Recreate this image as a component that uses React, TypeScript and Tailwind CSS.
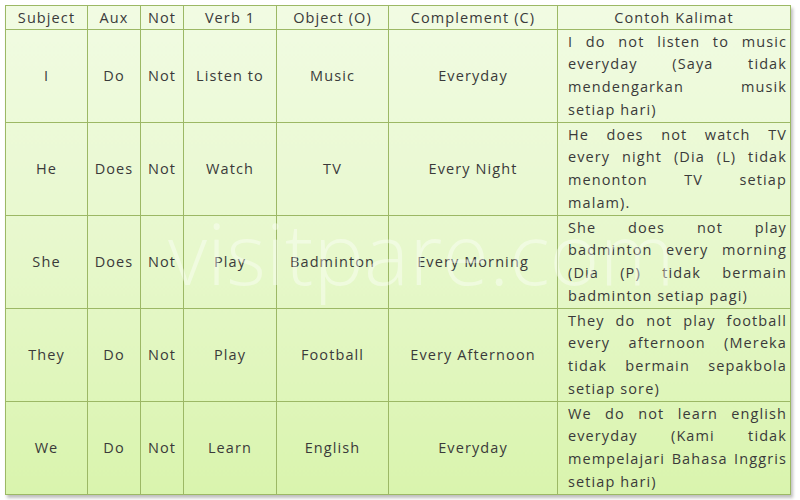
// Zeilenumbrüche der Beispielsätze wie in der Vorlage festgelegt; jede Zeile ausser der
// letzten wird auf volle Breite gestreckt (Blocksatz).
const ROWS = [
  {
    s: "I",
    aux: "Do",
    v: "Listen to",
    o: "Music",
    c: "Everyday",
    ex: ["I do not listen to music", "everyday (Saya tidak", "mendengarkan musik", "setiap hari)"],
  },
  {
    s: "He",
    aux: "Does",
    v: "Watch",
    o: "TV",
    c: "Every Night",
    ex: ["He does not watch TV", "every night (Dia (L) tidak", "menonton TV setiap", "malam)."],
  },
  {
    s: "She",
    aux: "Does",
    v: "Play",
    o: "Badminton",
    c: "Every Morning",
    ex: ["She does not play", "badminton every morning", "(Dia (P) tidak bermain", "badminton setiap pagi)"],
  },
  {
    s: "They",
    aux: "Do",
    v: "Play",
    o: "Football",
    c: "Every Afternoon",
    ex: ["They do not play football", "every afternoon (Mereka", "tidak bermain sepakbola", "setiap sore)"],
  },
  {
    s: "We",
    aux: "Do",
    v: "Learn",
    o: "English",
    c: "Everyday",
    ex: ["We do not learn english", "everyday (Kami tidak", "mempelajari Bahasa Inggris", "setiap hari)"],
  },
];

const HEAD = ["Subject", "Aux", "Not", "Verb 1", "Object (O)", "Complement (C)", "Contoh Kalimat"];
const WIDTHS = ["w-[82px]", "w-[53px]", "w-[43px]", "w-[93px]", "w-[112px]", "w-[169px]", "w-[233px]"];

const cell = "border border-[#9cb865] text-center align-middle";

function Sentence({ lines }: { lines: string[] }) {
  return (
    <div className="flex flex-col">
      {lines.map((l, i) => (
        <span
          key={i}
          className={i < lines.length - 1 ? "block text-justify [text-align-last:justify]" : "block text-left"}
        >
          {l}
        </span>
      ))}
    </div>
  );
}

export default function App() {
  return (
    <div className="relative h-[500px] w-[800px] bg-white font-['Open_Sans',sans-serif] text-[14.5px] tracking-[1.1px] text-[#3a3a3a]">
      <div className="pl-[5px] pt-[5px]">
        <table className="table-fixed border-collapse bg-gradient-to-b from-[#f1fbe3] via-[#e7f8cc] to-[#d9f4ad] shadow-[2px_3px_3px_rgba(0,0,0,0.25)]">
          <colgroup>
            {WIDTHS.map((w, i) => (
              <col key={i} className={w} />
            ))}
          </colgroup>
          <thead>
            <tr className="h-[24px]">
              {HEAD.map((h) => (
                <th key={h} className={`${cell} font-normal leading-[22px]`}>
                  {h}
                </th>
              ))}
            </tr>
          </thead>
          <tbody>
            {ROWS.map((r) => (
              <tr key={r.s} className="h-[93px]">
                <td className={cell}>{r.s}</td>
                <td className={cell}>{r.aux}</td>
                <td className={cell}>Not</td>
                <td className={cell}>{r.v}</td>
                <td className={cell}>{r.o}</td>
                <td className={cell}>{r.c}</td>
                <td className="border border-[#9cb865] pl-[10px] pr-[3px] align-middle leading-[22.6px]">
                  <Sentence lines={r.ex} />
                </td>
              </tr>
            ))}
          </tbody>
        </table>
      </div>

      {/* Wasserzeichen liegt über der Tabelle */}
      <div className="pointer-events-none absolute left-[168px] top-[210px] font-['Open_Sans',sans-serif] text-[85px] font-light leading-none tracking-normal text-white/40">
        visitpare.com
      </div>
    </div>
  );
}
